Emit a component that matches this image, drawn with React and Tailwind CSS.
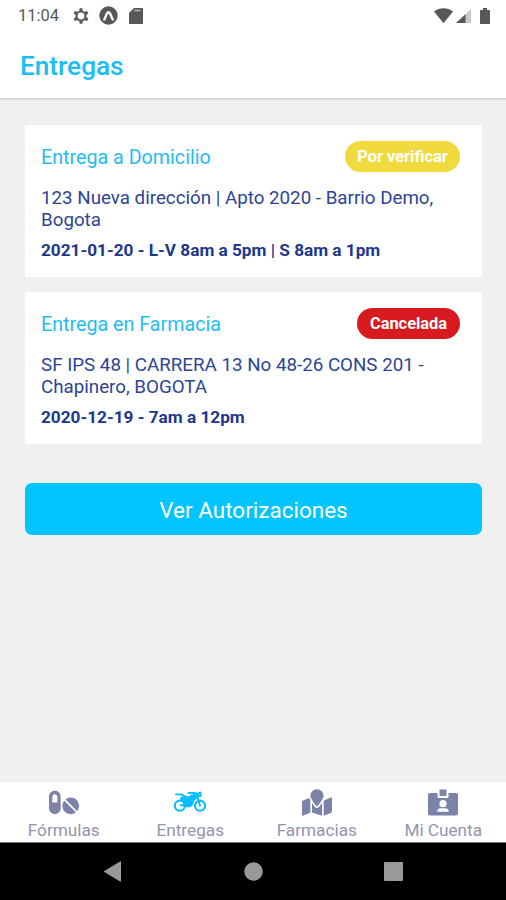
import React, { useState } from 'react';
import { FaPills, FaMapMarked } from 'react-icons/fa';

const deliveries = [
  {
    id: 1,
    title: 'Entrega a Domicilio',
    status: 'Por verificar',
    badge: 'bg-[#f1da3e] w-[115px]',
    address: ['123 Nueva dirección | Apto 2020 - Barrio Demo,', 'Bogota'],
    schedule: '2021-01-20 - L-V 8am a 5pm | S 8am a 1pm',
  },
  {
    id: 2,
    title: 'Entrega en Farmacia',
    status: 'Cancelada',
    badge: 'bg-[#d61a1f] w-[103px]',
    address: ['SF IPS 48 | CARRERA 13 No 48-26 CONS 201 -', 'Chapinero, BOGOTA'],
    schedule: '2020-12-19 - 7am a 12pm',
  },
];

const MotorcycleIcon = ({ className }) => (
  <svg className={className} viewBox="0 0 34 27" fill="none" stroke="currentColor">
    <circle cx="6.800" cy="16.700" r="5" strokeWidth="2.200" />
    <circle cx="27" cy="16.700" r="5" strokeWidth="2.200" />
    <path d="M3 5.400h5.500l3 1.800M15.500 4h4l2 1.500M20.500 3.800l3 .700L27 16.700M24 5l3.500-1.500v3.800L24 6" strokeWidth="1.900" strokeLinecap="round" strokeLinejoin="round" />
    <path d="M8.500 7.800 12 6.800l3.500.700 2.500-1.800h5l1.500 3.200-3 2.500-1.700 4.600-2.300 2.200h-5l-1.700-1H7v-2h3.500Q10 11.500 6.500 10Z" fill="currentColor" stroke="none" />
  </svg>
);

const BadgeIcon = ({ className }) => (
  <svg className={className} viewBox="0 0 30 27" fill="currentColor">
    <path d="M2 4h7.500v3.500Q9.500 9 11 9h8q1.500 0 1.500-1.500V4H28q2 0 2 2v18.500q0 2-2 2H2q-2 0-2-2V6q0-2 2-2Z" />
    <rect x="11.500" y="0.500" width="7" height="6.500" rx="1" />
    <circle cx="15" cy="14.700" r="3.600" fill="#fff" />
    <path d="M9.200 22.800q0-3.600 3.300-3.600h5q3.300 0 3.300 3.600Z" fill="#fff" />
  </svg>
);

const tabs = [
  { name: 'Fórmulas', Icon: FaPills, size: 'w-[30px]' },
  { name: 'Entregas', Icon: MotorcycleIcon, size: 'w-[34px]' },
  { name: 'Farmacias', Icon: FaMapMarked, size: 'w-[30px]' },
  { name: 'Mi Cuenta', Icon: BadgeIcon, size: 'w-[30px]' },
];

const StatusBar = () => (
  <div className="flex h-[31px] items-center justify-between pl-[18px] pr-4 text-[#585858]">
    <div className="flex items-center">
      <span className="w-[41px] whitespace-nowrap text-[16.5px] leading-[31px]">11:04</span>
      <svg className="ml-[14px] h-4 w-4" viewBox="0 0 16 16" fill="none" stroke="currentColor">
        <circle cx="8" cy="8" r="4.500" strokeWidth="2.200" />
        <path d="M8 .3v3M8 12.700v3M1.300 4.150l2.600 1.500M12.100 10.350l2.600 1.500M1.300 11.850l2.600-1.500M12.100 5.650l2.600-1.500" strokeWidth="3" />
      </svg>
      <svg className="ml-[10px] h-[19px] w-[19px]" viewBox="0 0 19 19">
        <circle cx="9.500" cy="9.500" r="9.200" fill="currentColor" />
        <path d="M5.300 13.400C7 11 7.500 6.200 9.500 6.200S12 11 13.700 13.400" fill="none" stroke="#fff" strokeWidth="2.400" strokeLinecap="round" />
      </svg>
      <svg className="ml-[11px] h-4 w-[14px]" viewBox="0 0 14 16">
        <path d="M5 0h8q1 0 1 1v14q0 1-1 1H1q-1 0-1-1V5Z" fill="currentColor" />
        <path d="M5.500 2.500h6" stroke="#bbb" strokeWidth="1.500" />
      </svg>
    </div>
    <div className="flex items-center">
      <svg className="h-4 w-[19px]" viewBox="0 0 19 16">
        <path d="M0 3.400C5.500-.7 13.500-.7 19 3.400L9.500 15.200Z" fill="currentColor" />
      </svg>
      <svg className="ml-[3px] h-4 w-[15px]" viewBox="0 0 15 16">
        <path d="M15 1v14H0Z" fill="#c9c9c9" />
        <path d="M9.500 6.200V15H0Z" fill="currentColor" />
      </svg>
      <svg className="ml-[9px] h-4 w-[10px]" viewBox="0 0 10 16">
        <path d="M3 0h4v2h2.200q.8 0 .8.8v12.400q0 .8-.8.8H.8Q0 16 0 15.200V2.800Q0 2 .8 2H3Z" fill="currentColor" />
      </svg>
    </div>
  </div>
);

const DeliveryCard = ({ delivery }) => (
  <section className="h-[152px] bg-white px-4 pt-4">
    <div className="flex h-[31px] items-center justify-between pr-1.5">
      <h2 className="pt-0.5 text-[19.7px] leading-6 whitespace-nowrap text-[#1fbdf5]">{delivery.title}</h2>
      <span className={`flex h-[31px] items-center justify-center rounded-full pt-px text-[16.4px] font-bold whitespace-nowrap text-white ${delivery.badge}`}>
        {delivery.status}
      </span>
    </div>
    <p className="mt-[15px] text-[18.75px] leading-[22px] whitespace-nowrap text-[#2c4596]">
      {delivery.address[0]}
      <br />
      {delivery.address[1]}
    </p>
    <p className="mt-2 text-[17.2px] leading-[22px] font-bold whitespace-nowrap text-[#1c388e]">{delivery.schedule}</p>
  </section>
);

const TabBar = ({ active, onChange }) => (
  <nav className="flex h-[60px] bg-white">
    {tabs.map(({ name, Icon, size }) => (
      <button key={name} onClick={() => onChange(name)} className="flex flex-1 flex-col items-center pt-[7px] pl-px">
        <Icon className={`h-[27px] ${size} ${active === name ? 'text-[#08bdfa]' : 'text-[#7c82a8]'}`} />
        <span className="mt-1 text-[17.2px] leading-5 whitespace-nowrap text-[#9295ad]">{name}</span>
      </button>
    ))}
  </nav>
);

const SystemNav = () => (
  <div className="flex h-[58px] border-t border-[#777] bg-black">
    <svg className="h-full w-full" viewBox="0 0 506 57" fill="#999">
      <path d="M103.500 28.500 120 18.500q1-.6 1 .5v19q0 1-1 .5Z" />
      <circle cx="253.500" cy="28.500" r="9.300" />
      <rect x="384" y="19" width="19" height="19" rx="1" />
    </svg>
  </div>
);

export default function App() {
  const [active, setActive] = useState('Entregas');

  return (
    <div className="flex h-[900px] w-[506px] flex-col overflow-hidden bg-[#f0f0f0] font-['Roboto',sans-serif]">
      <header className="h-[99px] border-b border-[#d5d5d5] bg-white shadow-[0_1px_1px_#e2e2e2]">
        <StatusBar />
        <h1 className="pt-[17px] pl-5 text-[26.2px] leading-9 font-medium text-[#1abdf5]">Entregas</h1>
      </header>
      <main className="flex flex-1 flex-col px-6 pt-[26px]">
        <div className="flex flex-col gap-[15px] pl-px">
          {deliveries.map((delivery) => (
            <DeliveryCard key={delivery.id} delivery={delivery} />
          ))}
        </div>
        <button className="mt-[39px] ml-px h-[52px] rounded-[7px] bg-[#02c4ff] pt-[3px] text-[22.5px] text-white">
          Ver Autorizaciones
        </button>
      </main>
      <TabBar active={active} onChange={setActive} />
      <SystemNav />
    </div>
  );
}
